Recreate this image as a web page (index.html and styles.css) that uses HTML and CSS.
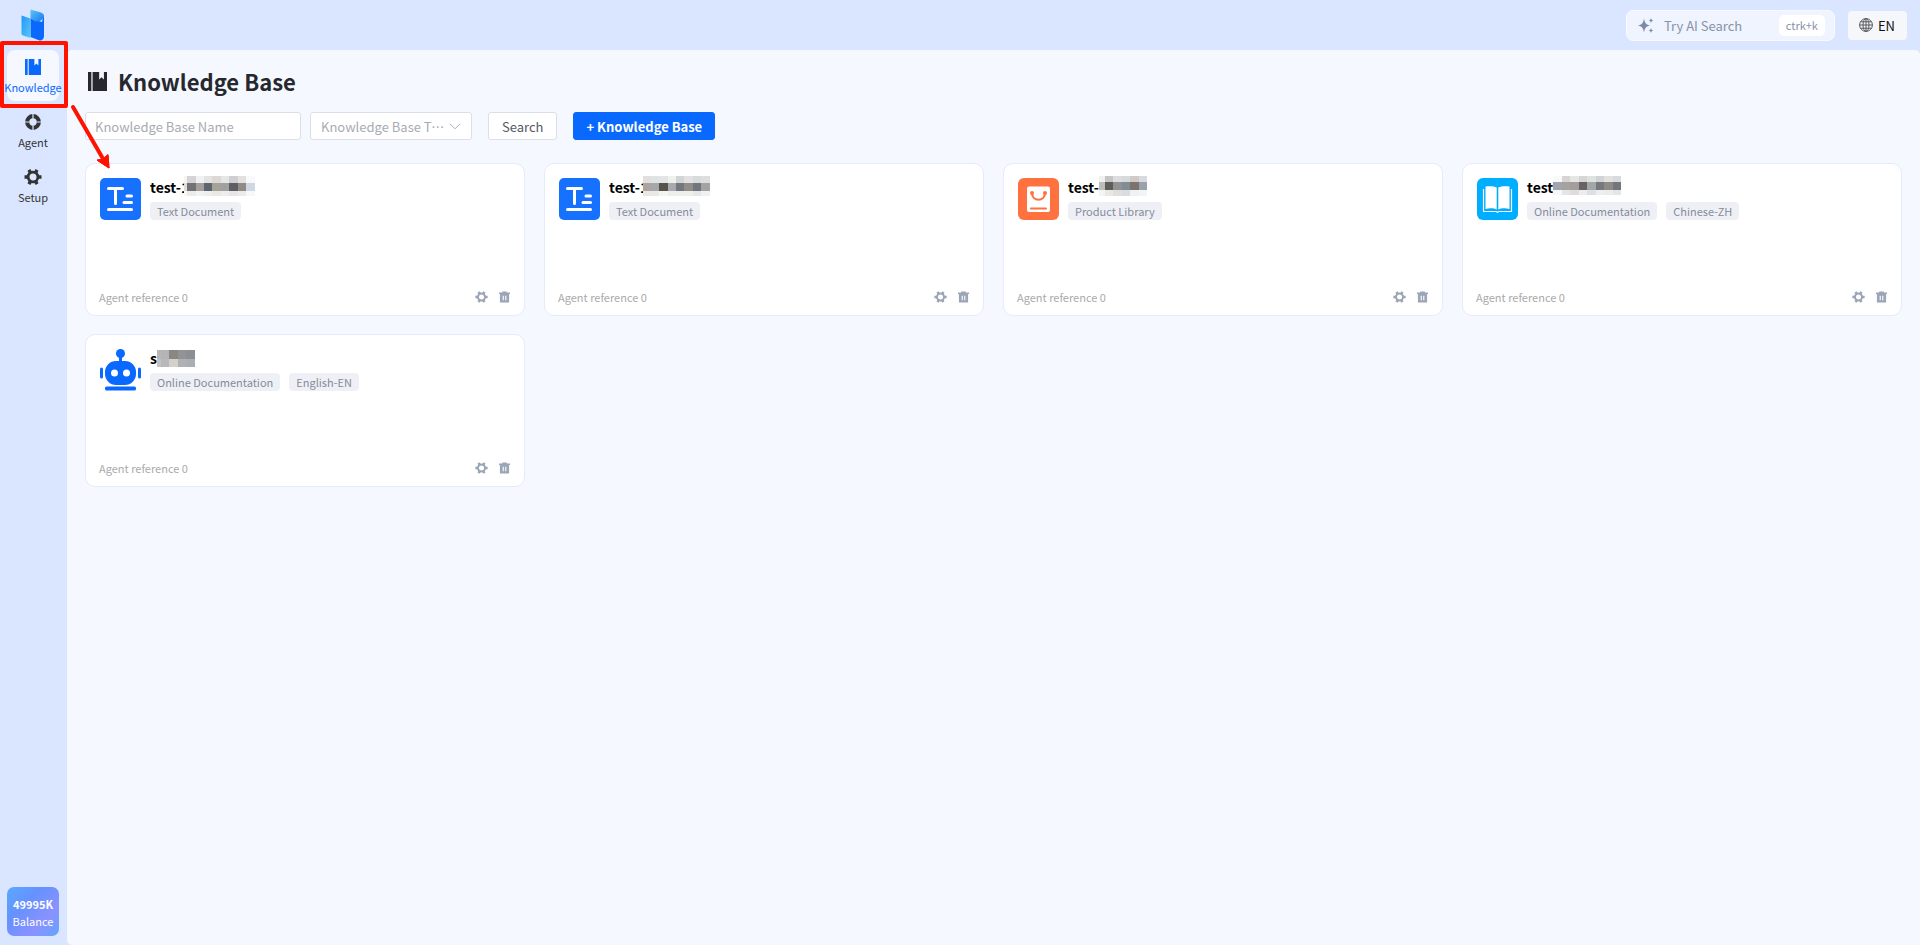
FILE: index.html
```html
<!DOCTYPE html>
<html lang="en">
  <head>
    <meta charset="UTF-8" />
    <meta name="viewport" content="width=device-width, initial-scale=1.0" />
    <title>Knowledge Base</title>
    <link rel="stylesheet" href="styles.css">
  </head>
  <body>
    <!-- Shared icons -->
    <svg class="sprite" aria-hidden="true">
      <symbol id="icon-book" viewBox="0 0 16 16">
        <path d="M0 0h2.6v16H0z" />
        <path d="M2.6 0h1.4v16H2.6z" opacity="0.3" />
        <path d="M4 0h5.4v6.4l2-2 2 2V0H16v16H4z" />
      </symbol>
      <symbol id="icon-gear" viewBox="0 0 18 16">
        <circle cx="9" cy="8" r="4.900" fill="none" stroke="currentColor" stroke-width="2.800" />
        <path d="M.5 8H4M14 8h3.500M4.900 .9l2 3.500M13.100 .9l-2 3.500M4.900 15.100l2-3.500M13.100 15.100l-2-3.500" stroke="currentColor" stroke-width="3.400" />
      </symbol>
      <symbol id="icon-trash" viewBox="0 0 12 12">
        <path fill-rule="evenodd" d="M3.5 0h5v1.2H12v1.6h-1V12H1V2.800H0V1.200h3.500zM4 4.500v5h1.200v-5zM6.800 4.500v5H8v-5z" />
      </symbol>
      <symbol id="icon-text" viewBox="0 0 41 42">
        <rect width="41" height="42" rx="5" fill="#1671ff" />
        <path d="M8.500 10.500h14M15.500 10.500v15M27 18h4.500M24 24.500h7.500M8.500 31.500h23" fill="none" stroke="#fff" stroke-width="3" stroke-linecap="round" />
      </symbol>
    </svg>

    <header class="topbar">
      <a href="#" class="logo" aria-label="Home">
        <svg width="24" height="32" viewBox="0 0 24 32">
          <defs>
            <linearGradient id="logoLeft" x1="0" y1="0" x2="1" y2="1">
              <stop offset="0" stop-color="#2196f8" />
              <stop offset="1" stop-color="#5bc8fa" />
            </linearGradient>
            <linearGradient id="logoTop" x1="0" y1="0" x2="1" y2="1">
              <stop offset="0" stop-color="#5cc6f5" />
              <stop offset="1" stop-color="#1a78f5" />
            </linearGradient>
          </defs>
          <path d="M9.500 9.500 21 13l2-8v22c0 3-2 5-4.500 4.500L9.500 28z" fill="#0a68fc" />
          <path d="M0.500 6.500 9.500 9.500V29L2 26.500C1 26 .5 25.500.5 24.500z" fill="url(#logoLeft)" />
          <path d="M9.500 0.500 20 3.500c2 .7 3 2 3 4-1.500 4-4.500 5.500-8.500 5L9.500 9.500z" fill="url(#logoTop)" />
        </svg>
      </a>
      <div class="topbar-right">
        <label class="ai-search">
          <svg width="17" height="15" viewBox="0 0 17 15" fill="#7b8ba5">
            <path d="M7 .5c.8 4.700 2 6.200 6.500 7C9 8.300 7.800 9.800 7 14.500 6.200 9.800 5 8.300.5 7.500 5 6.700 6.200 5.200 7 .5z" />
            <path d="M14 0c.4 1.600.9 2.100 2.500 2.500-1.600.4-2.100.9-2.500 2.500-.4-1.600-.9-2.100-2.500-2.500C13.100 2.100 13.600 1.600 14 0zM14 10c.4 1.600.9 2.100 2.500 2.500-1.600.4-2.100.9-2.500 2.500-.4-1.600-.9-2.100-2.500-2.500 1.600-.4 2.100-.9 2.500-2.500z" />
          </svg>
          <input type="text" placeholder="Try AI Search" aria-label="Try AI Search" />
          <kbd>ctrk+k</kbd>
        </label>
        <button type="button" class="lang">
          <svg width="14" height="14" viewBox="0 0 14 14" fill="none" stroke="#55575c">
            <circle cx="7" cy="7" r="6.400" />
            <ellipse cx="7" cy="7" rx="3" ry="6.400" />
            <path d="M7 .6v12.800M.6 7h12.800M1.500 3.800h11M1.500 10.200h11" />
          </svg>
          EN
        </button>
      </div>
    </header>

    <div class="layout">
      <aside class="sidebar">
        <nav>
          <a href="#" class="nav-item active">
            <svg width="16" height="16"><use href="#icon-book" /></svg>
            <span>Knowledge</span>
          </a>
          <a href="#" class="nav-item">
            <svg width="16" height="16" viewBox="0 0 16 16" fill="none" stroke="#333">
              <circle cx="8" cy="8" r="5.800" stroke-width="4.200" />
              <path d="M8 0v4.800M8 11.200V16M0 8h4.800M11.200 8H16" stroke="#dbe6fe" stroke-width="1.200" />
            </svg>
            <span>Agent</span>
          </a>
          <a href="#" class="nav-item">
            <svg width="18" height="16"><use href="#icon-gear" /></svg>
            <span>Setup</span>
          </a>
        </nav>
        <div class="balance">
          <strong>49995K</strong>
          <span>Balance</span>
        </div>
      </aside>

      <main class="content">
        <h1>
          <svg width="19" height="19"><use href="#icon-book" /></svg>
          Knowledge Base
        </h1>

        <form class="filters">
          <input type="text" class="name-input" placeholder="Knowledge Base Name" aria-label="Knowledge Base Name" />
          <div class="select-wrap">
            <select aria-label="Knowledge Base Type">
              <option>Knowledge Base Type</option>
            </select>
            <svg class="chevron" width="12" height="7" viewBox="0 0 12 7" fill="none" stroke="#a8abb2">
              <path d="M1 .8l5 5 5-5" />
            </svg>
          </div>
          <button type="button" class="btn">Search</button>
          <button type="button" class="btn btn-primary">+ Knowledge Base</button>
        </form>

        <div class="cards" id="cards"></div>
      </main>
    </div>

    <!-- Walkthrough marks -->
    <div class="mark-box"></div>
    <svg class="mark-arrow" width="42" height="68" viewBox="0 0 42 68">
      <path d="M3 4 32 54" stroke="#ff1200" stroke-width="4" stroke-linecap="round" />
      <path d="M39 65 27.500 57.500l5-1.500 5.500-3.500z" fill="#ff1200" stroke="#ff1200" />
      <path d="M39 65 27 57l5.500-1 5.500-4.500z" fill="#ff1200" stroke="#ff1200" />
    </svg>

    <script src="script.js"></script>
  </body>
</html>
```

FILE: styles.css
```css
:root {
  --primary: #0969ff;
  --bar: #dae6ff;
  --background: #f5f8ff;
  --card-border: #e4ebff;
  --control-border: #dcdfe6;
  --text: #26282e;
  --text-light: #a8abb2;
  --mark: #ff1200;
}

* {
  margin: 0;
  padding: 0;
  box-sizing: border-box;
}

body {
  display: flex;
  flex-direction: column;
  min-height: 100vh;
  font-family: "Noto Sans CJK SC", "Noto Sans", sans-serif;
  font-size: 13px;
  line-height: 20px;
  color: var(--text);
  background-color: var(--bar);
}

a {
  color: inherit;
  text-decoration: none;
}

svg {
  display: block;
  flex-shrink: 0;
}

input,
select,
button,
kbd {
  font-family: inherit;
  font-size: 13px;
}

button {
  cursor: pointer;
}

.sprite {
  position: absolute;
  width: 0;
  height: 0;
}

/* Top bar */
.topbar {
  display: flex;
  align-items: center;
  justify-content: space-between;
  height: 50px;
  padding: 0 13px 0 21px;
}

.topbar-right {
  display: flex;
  align-items: center;
  gap: 13px;
}

.ai-search {
  display: flex;
  align-items: center;
  gap: 10px;
  width: 209px;
  height: 31px;
  padding: 0 9px 0 10px;
  border: 1px solid #f8faff;
  border-radius: 7px;
  background-color: #eff4ff;
}

.ai-search input {
  flex: 1;
  min-width: 0;
  border: none;
  outline: none;
  background: transparent;
}

.ai-search input::placeholder {
  color: #8792a8;
}

.ai-search kbd {
  padding: 0 7px;
  border-radius: 5px;
  font-size: 11px;
  line-height: 21px;
  color: #8792a8;
  background-color: #fff;
}

.lang {
  display: flex;
  align-items: center;
  gap: 5px;
  height: 29px;
  padding: 0 12px 0 11px;
  border: none;
  border-radius: 4px;
  color: #111;
  background-color: #f5f7fb;
}

/* Sidebar */
.layout {
  display: flex;
  flex: 1;
}

.sidebar {
  display: flex;
  flex-direction: column;
  justify-content: space-between;
  width: 67px;
  padding: 0 8px 9px 7px;
}

.sidebar nav {
  display: flex;
  flex-direction: column;
  gap: 4px;
}

.nav-item {
  display: flex;
  flex-direction: column;
  align-items: center;
  height: 51px;
  padding-top: 9px;
  border-radius: 8px;
  font-size: 11px;
  line-height: 24px;
  color: #333;
  fill: #333;
}

.nav-item.active {
  color: var(--primary);
  fill: var(--primary);
  background-color: var(--background);
}

.balance {
  display: flex;
  flex-direction: column;
  align-items: center;
  padding: 9px 0 6px;
  border-radius: 7px;
  font-size: 11px;
  line-height: 17px;
  color: #fff;
  background: linear-gradient(135deg, #5aa9ff, #6691ff 35%, #8a92ff 70%, #62a4ff);
}

/* Content */
.content {
  flex: 1;
  padding: 14px 18px;
  border-radius: 5px 5px 0 5px;
  background-color: var(--background);
}

h1 {
  display: flex;
  align-items: center;
  gap: 11px;
  padding-left: 3px;
  font-size: 22px;
  font-weight: 700;
  line-height: 34px;
  fill: var(--text);
}

.filters {
  display: flex;
  margin: 14px 0 23px;
}

.name-input,
.select-wrap select,
.btn {
  height: 28px;
  border: 1px solid var(--control-border);
  border-radius: 3px;
  background-color: #fff;
}

.name-input {
  width: 216px;
  margin-right: 9px;
  padding: 0 9px;
}

.name-input::placeholder {
  color: var(--text-light);
}

.select-wrap {
  position: relative;
  width: 162px;
  margin-right: 16px;
}

.select-wrap select {
  width: 100%;
  padding: 0 26px 0 10px;
  appearance: none;
  text-overflow: ellipsis;
  color: var(--text-light);
}

.chevron {
  position: absolute;
  top: 11px;
  right: 11px;
  pointer-events: none;
}

.btn {
  padding: 0 13px;
  margin-right: 16px;
  color: #55585f;
}

.btn-primary {
  padding: 0 12px;
  border-color: var(--primary);
  font-weight: 700;
  color: #fff;
  background-color: var(--primary);
}

/* Cards */
.cards {
  display: grid;
  grid-template-columns: repeat(4, 1fr);
  gap: 18px 19px;
}

.card {
  display: flex;
  flex-direction: column;
  justify-content: space-between;
  height: 153px;
  padding: 14px 14px 8px 13px;
  border: 1px solid var(--card-border);
  border-radius: 10px;
  background-color: #fff;
}

.card-head {
  display: flex;
  gap: 9px;
  padding-left: 1px;
}

.card-name {
  display: flex;
  font-size: 14px;
  font-weight: 700;
  line-height: 18px;
  color: #000;
}

.mosaic {
  margin-top: -2px;
}

.mosaic.over {
  margin-left: -5px;
}

.tags {
  display: flex;
  gap: 9px;
  margin-top: 6px;
}

.tag {
  padding: 0 7px;
  border-radius: 4px;
  font-size: 11px;
  line-height: 18px;
  color: #858b9c;
  background-color: #eff0f5;
}

.card-foot {
  display: flex;
  align-items: center;
  gap: 11px;
  font-size: 11px;
  color: #aaa;
}

.card-foot span {
  flex: 1;
}

.icon-btn {
  border: none;
  background: none;
  color: #9ca5b6;
  fill: #9ca5b6;
}

/* Walkthrough marks */
.mark-box {
  position: absolute;
  top: 41px;
  left: 0;
  width: 68px;
  height: 67px;
  border: 4px solid var(--mark);
  border-radius: 2px;
  pointer-events: none;
}

.mark-arrow {
  position: absolute;
  top: 103px;
  left: 70px;
  pointer-events: none;
}

@media (max-width: 1100px) {
  .cards {
    grid-template-columns: repeat(2, 1fr);
  }
}
```

FILE: script.js
```js
const icons = {
  text: `<use href="#icon-text" />`,
  product: `
    <rect width="41" height="42" rx="6" fill="#ff7240" />
    <rect x="9" y="8.500" width="23" height="25.500" rx="2" fill="#fff" />
    <path d="M14 15c0 9 13 9 13 0M13 30.500h15" fill="none" stroke="#ff7240" stroke-width="2.200" stroke-linecap="round" />
    <circle cx="14" cy="15" r="2" fill="#ff7240" />
    <circle cx="27" cy="15" r="2" fill="#ff7240" />`,
  online: `
    <rect width="41" height="42" rx="6" fill="#00aeff" />
    <path d="M8.500 8.500C12 8 17 8 19.700 9.500v22C17 30 12 30 8.500 31z" fill="#fff" />
    <path d="M32.500 8.500C29 8 24 8 21.300 9.500v22C24 30 29 30 32.500 31z" fill="#fff" />
    <path d="M6.500 11v22.500h12.500l1.500.8 1.500-.8h12.500V11" fill="none" stroke="#fff" stroke-width="1.200" />`,
  robot: `
    <g fill="#0969ff">
      <circle cx="20.500" cy="4.500" r="4.500" />
      <path d="M19 8h3v5h-3z" />
      <rect x="5" y="12" width="31" height="24" rx="11" />
      <rect x="0" y="18.500" width="3" height="11" rx="1.500" />
      <rect x="38" y="18.500" width="3" height="11" rx="1.500" />
      <rect x="5" y="37.500" width="31" height="4" rx="1.500" />
    </g>
    <circle cx="14.500" cy="24" r="3.500" fill="#fff" />
    <circle cx="26.500" cy="24" r="3.500" fill="#fff" />`,
};

// xs and ys are the edges of the blocks, rows hold their colours
const cards = [
  {
    icon: "text", name: "test-1", tags: ["Text Document"],
    mosaic: {
      over: true,
      xs: [0, 3, 12, 20, 28, 37, 45, 54, 62, 71],
      ys: [0, 7, 15, 20],
      rows: [
        "#f5f5f5 #d4d4d4 #f1f1f1 #e3e3e3 #ddd8d5 #e4e7e8 #cfcfd1 #e2e1e0 #f8f9fb",
        "#dedede #727274 #a49f9c #5f656e #a5a29a #a0a09f #5e5f62 #918b87 #cfd8e2",
        "#f8f8f8 #ececec #f2f2f2 #eeeeef #ebe8e8 #efeeee #e7e6e7 #ecebea #f8f8fa",
      ],
    },
  },
  {
    icon: "text", name: "test-1", tags: ["Text Document"],
    mosaic: {
      over: true,
      xs: [0, 8, 16, 25, 33, 41, 50, 58, 67],
      ys: [0, 7, 15, 20],
      rows: [
        "#e2dedb #dfe3e5 #e2e4e5 #f0f0ef #d3d5d5 #e1e1df #d8dadb #dededf",
        "#aaa5a1 #a5a8a8 #56524c #a8a9ad #74787e #8f8d85 #70767b #a3a3a4",
        "#e9e8e8 #e9e9ea #f4f4f3 #eeeeef #eeeeed #efefed #e5e7e8 #f1f1f1",
      ],
    },
  },
  {
    icon: "product", name: "test-", tags: ["Product Library"],
    mosaic: {
      xs: [0, 6, 14, 23, 31, 40, 48],
      ys: [0, 6, 14, 20],
      rows: [
        "#f0f0ef #c5c5c6 #dddddf #d7d9db #d0cbc7 #d8dadd",
        "#bcbcbd #5f5d58 #929295 #828c95 #7b736d #99a2aa",
        "#f4f4f4 #e9e8e7 #dfdfdf #dadde0 #f2f1ef #f2f4f5",
      ],
    },
  },
  {
    icon: "online", name: "test", tags: ["Online Documentation", "Chinese-ZH"],
    mosaic: {
      xs: [0, 9, 17, 26, 34, 43, 51, 60, 68],
      ys: [0, 6, 14, 19],
      rows: [
        "#f8f9f9 #d7d4d3 #e5e7e6 #d8d5d7 #dfe2e1 #d2d3d4 #e3e1df #d8dadd",
        "#a1a5ad #a6a29f #a39e9b #676465 #a2a7aa #75797d #8e8b85 #70777e",
        "#f7f7f7 #e6e5e4 #dddddd #eeeded #dfe0e1 #edeeee #ebecec #e5e5e5",
      ],
    },
  },
  {
    icon: "robot", name: "s", tags: ["Online Documentation", "English-EN"],
    mosaic: {
      xs: [0, 4, 12, 21, 29, 38],
      ys: [3, 12, 20],
      rows: [
        "#b8b5b4 #b3b3b8 #8a8780 #939397 #8b9095",
        "#c3c3c6 #b8b8bc #d3d1cc #b0b1b5 #abafb3",
      ],
    },
  },
];

function drawMosaic({ xs, ys, rows, over }) {
  const width = xs[xs.length - 1];
  const height = ys[ys.length - 1];
  const rects = rows
    .map((row, r) =>
      row
        .split(" ")
        .map(
          (fill, c) =>
            `<rect x="${xs[c]}" y="${ys[r]}" width="${xs[c + 1] - xs[c]}" height="${ys[r + 1] - ys[r]}" fill="${fill}" />`
        )
        .join("")
    )
    .join("");
  return `<svg class="mosaic ${over ? "over" : ""}" width="${width}" height="${height}" shape-rendering="crispEdges">${rects}</svg>`;
}

document.getElementById("cards").innerHTML = cards
  .map(
    (card) => `
    <article class="card">
      <div class="card-head">
        <svg width="41" height="42" viewBox="0 0 41 42">${icons[card.icon]}</svg>
        <div>
          <h2 class="card-name">${card.name}${drawMosaic(card.mosaic)}</h2>
          <div class="tags">${card.tags.map((tag) => `<span class="tag">${tag}</span>`).join("")}</div>
        </div>
      </div>
      <div class="card-foot">
        <span>Agent reference 0</span>
        <button type="button" class="icon-btn" aria-label="Settings">
          <svg width="13" height="12"><use href="#icon-gear" /></svg>
        </button>
        <button type="button" class="icon-btn" aria-label="Delete">
          <svg width="11" height="12"><use href="#icon-trash" /></svg>
        </button>
      </div>
    </article>`
  )
  .join("");
```
